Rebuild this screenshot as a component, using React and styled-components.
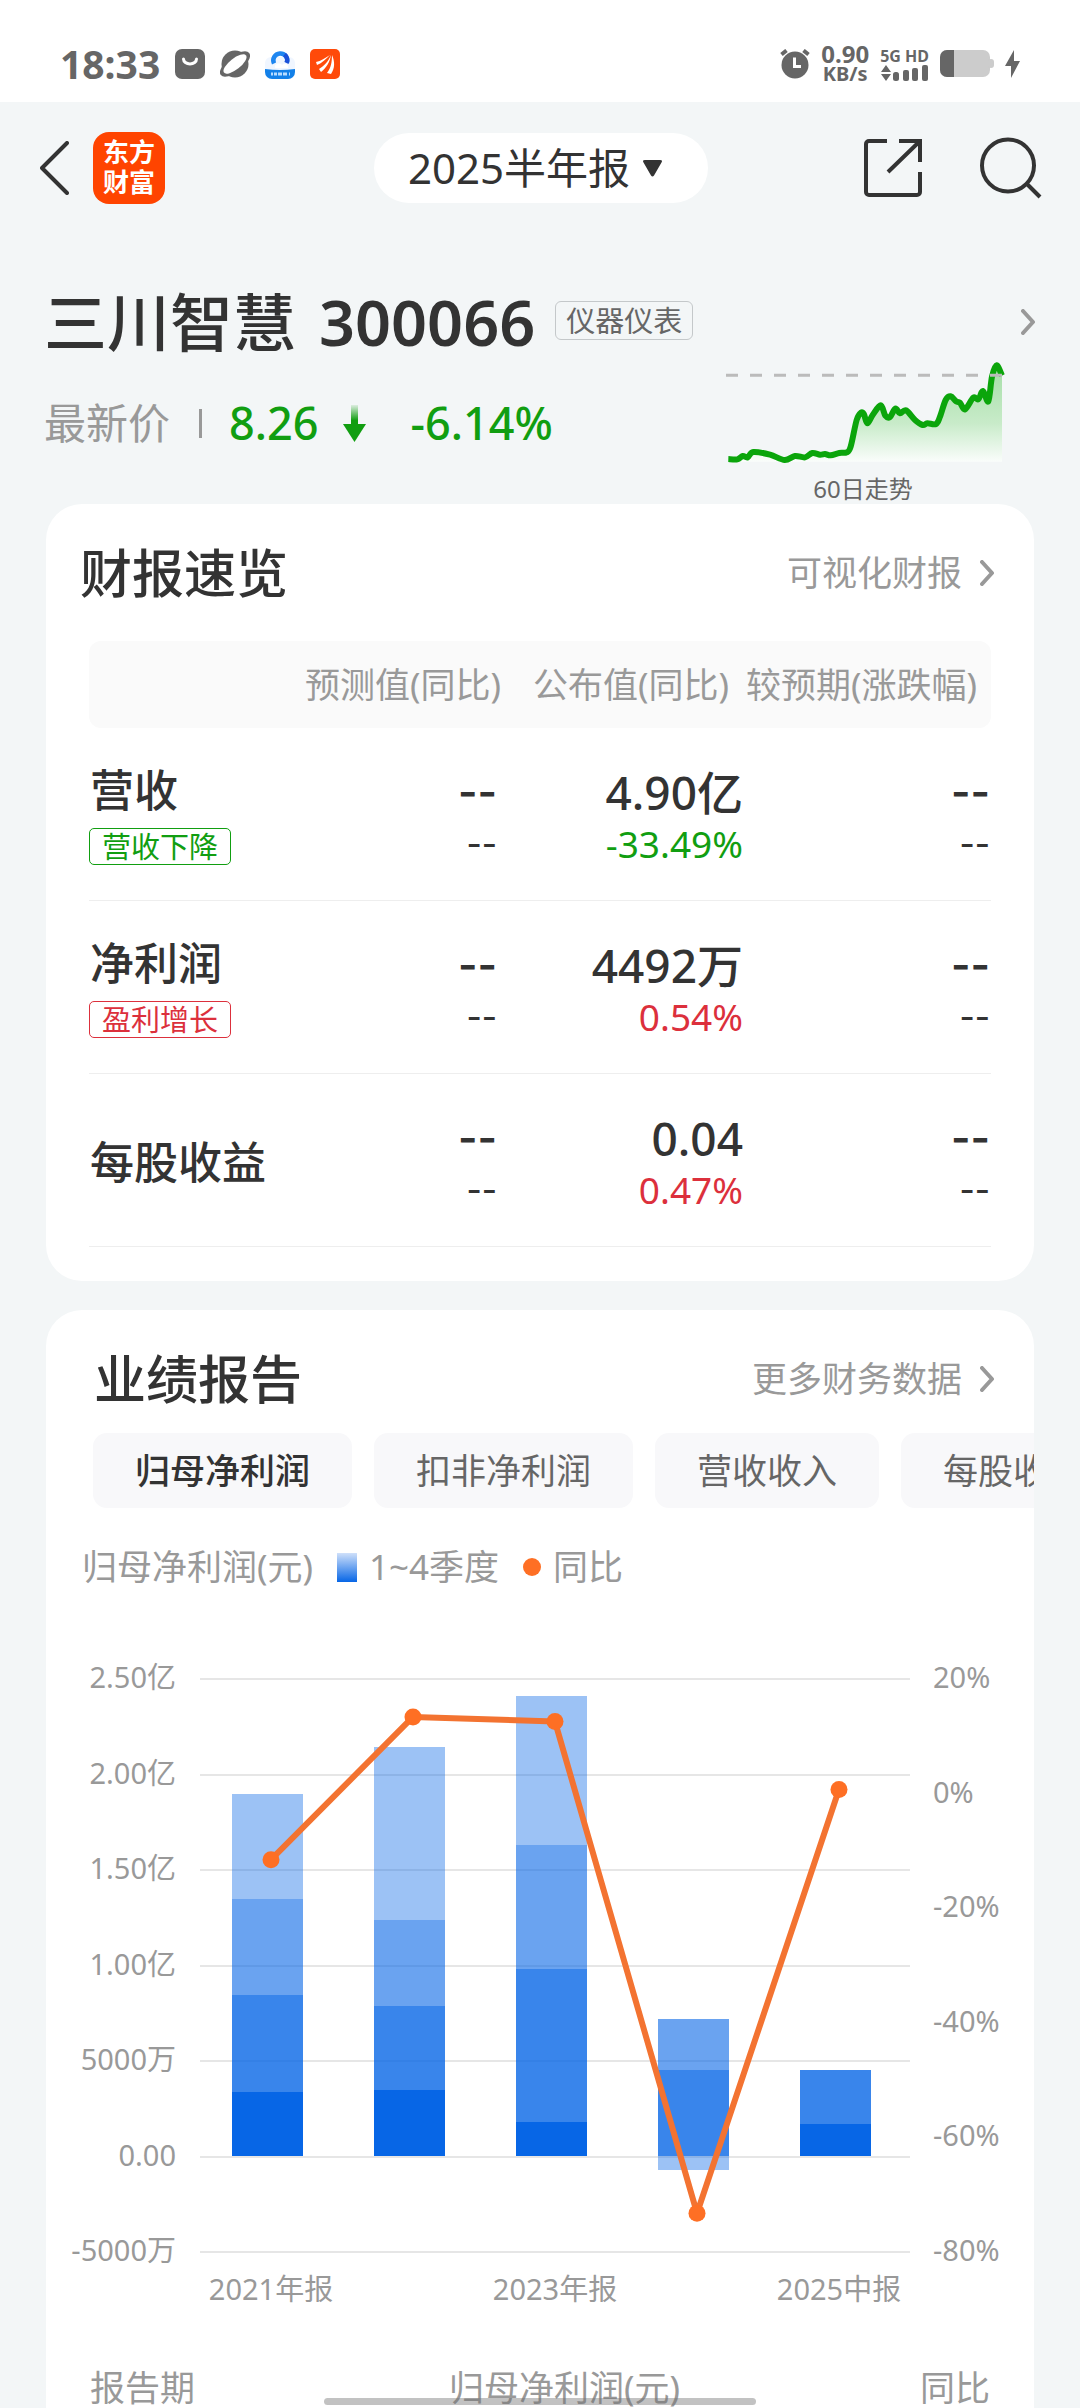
import React from "react";
import styled, { createGlobalStyle } from "styled-components";

const GlobalStyle = createGlobalStyle`
  * { box-sizing: border-box; }
  html, body { margin: 0; padding: 0; }
  body {
    background: #f3f6f7;
    color: #333;
    font-family: "Noto Sans", "Noto Sans CJK SC", sans-serif;
    font-size: 35px;
  }
  button, select { font: inherit; color: inherit; border: 0; margin: 0; padding: 0; background: none; }
  a { color: inherit; text-decoration: none; }
  h1, h2, p, figure { margin: 0; font-size: inherit; font-weight: inherit; }
  svg { display: block; flex: none; }
`;

const GREEN = "#119e11";
const RED = "#dc303c";

const Page = styled.div`
  min-height: 100vh;
  display: flex;
  flex-direction: column;
`;

/* ---------- status bar ---------- */

const StatusBar = styled.div`
  height: 102px;
  padding: 26px 60px 0;
  background: #fff;
  color: #666;
  display: flex;
  align-items: center;
  justify-content: space-between;
`;

const StatusGroup = styled.div`
  display: flex;
  align-items: center;
  gap: ${(p) => p.$gap}px;
`;

const Clock = styled.span`
  font-size: 39px;
  line-height: 40px;
  font-weight: 700;
`;

const Stack = styled.span`
  display: flex;
  flex-direction: column;
  align-items: center;
  font-weight: 700;
`;

const Tiny = styled.span`
  font-size: ${(p) => p.$size}px;
  line-height: ${(p) => p.$line}px;
  white-space: nowrap;
`;

/* ---------- navigation ---------- */

const NavBar = styled.nav`
  height: 132px;
  padding: 0 38px 0 40px;
  display: grid;
  grid-template-columns: 1fr auto 1fr;
  align-items: center;
`;

const NavSide = styled.div`
  display: flex;
  align-items: center;
  justify-content: ${(p) => (p.$end ? "flex-end" : "flex-start")};
  gap: ${(p) => (p.$end ? 58 : 24)}px;
`;

const IconButton = styled.button`
  display: block;
  cursor: pointer;
`;

const Logo = styled.a`
  width: 72px;
  height: 72px;
  padding: 5px 0;
  border-radius: 16px;
  background: #ff4400;
  color: #fff;
  font-size: 26px;
  line-height: 30px;
  font-weight: 700;
  text-align: center;
`;

const PeriodPicker = styled.label`
  height: 70px;
  padding: 0 46px 0 34px;
  border-radius: 35px;
  background: #fff;
  display: flex;
  align-items: center;
  gap: 12px;
`;

const PeriodSelect = styled.select`
  appearance: none;
  font-size: 42px;
  line-height: 60px;
`;

/* ---------- stock header ---------- */

const Hero = styled.header`
  padding: 50px 45px 0 44px;
`;

const TitleRow = styled.div`
  height: 76px;
  display: flex;
  align-items: center;
`;

const StockName = styled.h1`
  display: flex;
  gap: 23px;
  font-size: 63px;
  line-height: 76px;
  font-weight: 500;
  white-space: nowrap;
`;

const StockCode = styled.span`
  font-weight: 600;
`;

const Industry = styled.span`
  margin: 0 auto 4px 20px;
  padding: 0 10px;
  border: 1px solid #c4c8ca;
  border-radius: 6px;
  color: #666;
  font-size: 29px;
  line-height: 37px;
  white-space: nowrap;
`;

const QuoteRow = styled.div`
  padding-right: 29px;
  display: flex;
  justify-content: space-between;
`;

const Quote = styled.p`
  height: 50px;
  margin-top: 38px;
  display: flex;
  align-items: center;
  color: ${GREEN};
  font-size: 45px;
  line-height: 50px;
  font-weight: 500;
`;

const QuoteLabel = styled.span`
  padding-right: 29px;
  color: #999;
  font-size: 42px;
  font-weight: 400;
`;

const QuoteBar = styled.span`
  width: 3px;
  height: 29px;
  margin-right: 27px;
  background: #999;
`;

const QuoteArrow = styled.svg`
  margin: 0 44px 0 25px;
`;

const Trend = styled.figure`
  width: 286px;
  text-align: center;
`;

const TrendCaption = styled.figcaption`
  margin-top: 4px;
  color: #666;
  font-size: 24px;
  line-height: 30px;
`;

/* ---------- cards ---------- */

const Main = styled.main`
  flex: 1;
  padding: 0 46px;
  display: flex;
  flex-direction: column;
  gap: 29px;
`;

const Card = styled.section`
  background: #fff;
  border-radius: ${(p) => (p.$open ? "36px 36px 0 0" : "36px")};
  padding-bottom: ${(p) => (p.$open ? 0 : 34)}px;
  flex: ${(p) => (p.$open ? "1 0 auto" : "none")};
  overflow: hidden;
`;

const CardHead = styled.div`
  padding: 36px 40px 0 ${(p) => p.$inset}px;
  display: flex;
  align-items: center;
  justify-content: space-between;
`;

const CardTitle = styled.h2`
  font-size: 52px;
  line-height: 66px;
  font-weight: 500;
`;

const MoreLink = styled.a`
  display: flex;
  align-items: center;
  gap: 18px;
  color: #999;
  line-height: 50px;
`;

/* ---------- overview table ---------- */

const TableWrap = styled.div`
  padding: 35px 43px 0;
`;

const Table = styled.table`
  width: 100%;
  table-layout: fixed;
  border-spacing: 0;
`;

const HeadCell = styled.th`
  width: ${(p) => (p.$w ? p.$w + "px" : "auto")};
  height: 87px;
  padding: 0 ${(p) => p.$pad || 0}px 0 0;
  background: #fafafa;
  color: #999;
  font-weight: 400;
  line-height: 50px;
  text-align: right;
  white-space: nowrap;
  &:first-child { border-radius: 12px 0 0 12px; }
  &:last-child { border-radius: 0 12px 12px 0; }
`;

const LabelCell = styled.th`
  padding: 36px 0 32px 1px;
  border-bottom: 1px solid #eee;
  font-size: 44px;
  line-height: 52px;
  font-weight: 500;
  text-align: left;
  vertical-align: middle;
`;

const Badge = styled.span`
  display: block;
  width: fit-content;
  margin: 12px 0 3px -1px;
  padding: 0 12px;
  border: 1px solid;
  border-radius: 5px;
  color: ${(p) => p.$color};
  font-size: 29px;
  line-height: 35px;
  font-weight: 400;
`;

const ValueCell = styled.td`
  padding: 38px ${(p) => p.$pad}px 30px 0;
  border-bottom: 1px solid #eee;
  text-align: right;
  vertical-align: top;
`;

const Value = styled.span`
  display: block;
  font-size: 46px;
  line-height: 52px;
  font-weight: 500;
`;

const Change = styled.span`
  display: block;
  color: ${(p) => p.$color};
  font-size: 37px;
  line-height: 52px;
`;

const Dash = styled.span`
  display: block;
  height: 52px;
  font-family: Inter, "Noto Sans", sans-serif;
  font-size: ${(p) => (p.$small ? 33 : 42)}px;
  line-height: 52px;
  font-weight: ${(p) => (p.$small ? 500 : 600)};
`;

/* ---------- report card ---------- */

const Tabs = styled.div`
  margin-top: 21px;
  padding-left: 47px;
  display: flex;
  gap: 22px;
  overflow: hidden;
`;

const Tab = styled.button`
  flex: none;
  padding: 0 42px;
  border-radius: 14px;
  background: #f8f8fa;
  color: ${(p) => (p.$active ? "#333" : "#666")};
  font-weight: ${(p) => (p.$active ? 500 : 400)};
  line-height: 75px;
  cursor: pointer;
`;

const Legend = styled.div`
  margin-top: 34px;
  padding-left: 36px;
  display: flex;
  gap: 24px;
  color: #999;
  line-height: 50px;
`;

const LegendItem = styled.span`
  display: flex;
  align-items: center;
  gap: 12px;
`;

const Swatch = styled.i`
  width: 20px;
  height: 29px;
  background: linear-gradient(#cfe0fa, #0766e6);
`;

const Dot = styled.i`
  width: 18px;
  height: 18px;
  border-radius: 50%;
  background: #fe6f24;
`;

const ChartSvg = styled.svg`
  width: 100%;
  height: auto;
  fill: #999;
  font-size: 29px;
`;

const HistoryTable = styled(Table)`
  padding: 0 44px;
`;

const HistoryHead = styled.th`
  width: ${(p) => (p.$w ? p.$w + "px" : "auto")};
  padding: 0;
  color: #999;
  font-weight: 400;
  line-height: 42px;
  text-align: ${(p) => p.$align || "right"};
`;

const HomeBar = styled.div`
  position: fixed;
  left: 50%;
  bottom: 3px;
  width: 40%;
  height: 7px;
  border-radius: 4px;
  background: rgba(110, 110, 110, 0.42);
  transform: translateX(-50%);
`;

/* ---------- icons ---------- */

const Chevron = () => (
  <svg width="14" height="26" viewBox="0 0 14 26" fill="none" stroke="#999" strokeWidth="4" strokeLinecap="round" strokeLinejoin="round">
    <path d="M2 2l10 11L2 24" />
  </svg>
);

const BagIcon = () => (
  <svg width="30" height="30" viewBox="0 0 30 30">
    <rect width="30" height="30" rx="7" fill="#666" />
    <path d="M8.500 10a6.500 5 0 0 0 13 0" fill="none" stroke="#fff" strokeWidth="3" strokeLinecap="round" />
  </svg>
);

const PlanetIcon = () => (
  <svg width="30" height="30" viewBox="0 0 30 30">
    <circle cx="15" cy="15" r="13.500" fill="#666" />
    <ellipse cx="15" cy="15" rx="18" ry="8" transform="rotate(-38 15 15)" fill="#666" />
    <ellipse cx="15" cy="15" rx="14" ry="5.500" transform="rotate(-38 15 15)" fill="#fff" />
  </svg>
);

const CloudIcon = () => (
  <svg width="30" height="30" viewBox="0 0 30 30">
    <rect y="8" width="30" height="22" rx="6" fill="#f0f6ff" />
    <path d="M9 14.500a7 7 0 1 1 13-1" fill="none" stroke="#1e86f0" strokeWidth="4.500" />
    <path d="M19.500 5.500a7 7 0 0 1 2 8.500" fill="none" stroke="#1a50d8" strokeWidth="4.500" />
    <path d="M10 19c-1-4 4-6 7-3 3-3 7 0 6 3z" fill="#fff" />
    <path d="M0 20q15 2 30 0v3a7 7 0 0 1-7 7H7a7 7 0 0 1-7-7z" fill="#1380e8" />
    <path d="M6 25h2m1 0h3m1 0h4m1 0h4m2 0h1" stroke="#b8dcff" strokeWidth="3" />
  </svg>
);

const FanIcon = () => (
  <svg width="30" height="30" viewBox="0 0 30 30">
    <rect width="30" height="30" rx="5" fill="#ff4a0a" />
    <path d="M6 13c5-1 9-4 14-7-4 4-8 8-13 10zM9 20c5-3 9-7 12-14-1 7-5 13-10 17zM17 24c4-5 5-11 5-18 3 7 3 13-1 19z" fill="#fff" />
  </svg>
);

const AlarmIcon = () => (
  <svg width="30" height="30" viewBox="0 0 30 30">
    <circle cx="15" cy="16" r="13.500" fill="#666" />
    <path d="M1.500 5.500l5-4M28.500 5.500l-5-4" stroke="#666" strokeWidth="4" />
    <path d="M14.500 8.500v9h6.500" fill="none" stroke="#fff" strokeWidth="3" />
  </svg>
);

const SignalIcon = () => (
  <svg width="48" height="17" viewBox="0 0 48 17" fill="#666">
    <path d="M5 0l5 7H0zM5 16l5-7H0z" />
    <rect x="12" y="7" width="6" height="9" rx="2.500" />
    <rect x="22" y="5" width="6" height="11" rx="2" />
    <rect x="31" y="3" width="6" height="13" rx="2" />
    <rect x="41" y="0" width="6" height="16" rx="2" />
  </svg>
);

const BatteryIcon = () => (
  <svg width="54" height="28" viewBox="0 0 54 28">
    <rect width="50" height="27" rx="7" fill="#ccc" />
    <rect x="48" y="9" width="6" height="9" rx="3" fill="#ccc" />
    <path d="M7 0h7v27H7a7 7 0 0 1-7-7V7a7 7 0 0 1 7-7z" fill="#666" />
  </svg>
);

const BoltIcon = () => (
  <svg width="15" height="28" viewBox="0 0 15 28" fill="#666">
    <path d="M9 0L0 16h6v12l9-17H9z" />
  </svg>
);

/* ---------- charts ---------- */

const TREND_POINTS = [
  [145, 537], [172, 538], [188, 528], [203, 532], [220, 516], [270, 524], [314, 540],
  [345, 528], [375, 532], [397, 519], [420, 524], [435, 522], [452, 526], [478, 519],
  [500, 517], [512, 500], [530, 420], [543, 398], [552, 403], [562, 430], [578, 405],
  [602, 376], [616, 407], [630, 411], [646, 386], [660, 400], [678, 391], [705, 420],
  [728, 435], [742, 430], [768, 432], [780, 410], [797, 360], [812, 349], [828, 364],
  [840, 368], [855, 388], [880, 353], [895, 358], [909, 333], [925, 364], [936, 290],
  [950, 256], [966, 287],
];

// Catmull-Rom spline through the points, as cubic Bezier segments.
const spline = (pts) =>
  pts.reduce((d, p, i) => {
    if (i === 0) return `M${p[0]} ${p[1]}`;
    const a = pts[i - 2] || pts[i - 1];
    const b = pts[i - 1];
    const n = pts[i + 1] || p;
    const c1 = [b[0] + (p[0] - a[0]) / 6, b[1] + (p[1] - a[1]) / 6];
    const c2 = [p[0] - (n[0] - b[0]) / 6, p[1] - (n[1] - b[1]) / 6];
    return `${d}C${c1} ${c2} ${p}`;
  }, "");

function TrendChart() {
  const line = spline(TREND_POINTS);
  return (
    <svg width="286" height="110" viewBox="120 240 858 330" fill="none">
      <defs>
        <linearGradient id="trend" x1="0" y1="0" x2="0" y2="1">
          <stop offset="0" stopColor="#a4dea6" />
          <stop offset="0.6" stopColor="#c8ebc9" />
          <stop offset="1" stopColor="#fafdfb" />
        </linearGradient>
      </defs>
      <path d={`${line}V545H145Z`} fill="url(#trend)" />
      <path d={line} stroke="#0ba50b" strokeWidth="18" strokeLinejoin="round" />
      <path d="M138 286H970" stroke="#bbb" strokeWidth="9" strokeDasharray="36 36" />
    </svg>
  );
}

const BAR_COLOR = "#0766e6";
const QUARTER_OPACITY = [1, 0.8, 0.6, 0.4];

// Cumulative profit in 亿 at the end of each quarter, and the yearly change in %.
const YEARS = [
  { label: "2021年报", totals: [0.335, 0.84, 1.345, 1.895], change: -11.7 },
  { label: "2022年报", totals: [0.343, 0.785, 1.235, 2.14], change: 13.2 },
  { label: "2023年报", totals: [0.177, 0.977, 1.627, 2.405], change: 12.4 },
  { label: "2024年报", totals: [0, 0.447, 0.717], loss: -0.077, change: -73.4 },
  { label: "2025中报", totals: [0.165, 0.447], change: 0.54 },
];

const LEFT_TICKS = ["2.50亿", "2.00亿", "1.50亿", "1.00亿", "5000万", "0.00", "-5000万"];
const RIGHT_TICKS = ["20%", "0%", "-20%", "-40%", "-60%", "-80%"];

const TOP = 86;
const amountY = (v) => Math.round(TOP + (2.5 - v) * 191);
const changeY = (p) => TOP + (20 - p) * 5.73;
const barX = (i) => 186 + i * 142;
const pointX = (i) => 225 + i * 142;

function ProfitChart() {
  return (
    <ChartSvg viewBox="0 0 988 775" role="img" aria-label="归母净利润">
      {LEFT_TICKS.map((t, i) => {
        const y = Math.round(TOP + i * 95.5);
        return (
          <g key={t}>
            <rect x="154" y={y} width="710" height="2" fill="#e6e6e6" />
            <text x="130" y={y + 10} textAnchor="end">{t}</text>
          </g>
        );
      })}
      {RIGHT_TICKS.map((t, i) => (
        <text key={t} x="887" y={Math.round(TOP + i * 114.6) + 10}>{t}</text>
      ))}
      {YEARS.map((y, i) => (
        <g key={y.label} fill={BAR_COLOR}>
          {y.totals.map((t, q) => {
            const from = amountY(q ? y.totals[q - 1] : 0);
            return (
              <rect key={q} x={barX(i)} width="71" y={amountY(t)} height={from - amountY(t)} fillOpacity={QUARTER_OPACITY[q]} />
            );
          })}
          {y.loss && (
            <rect x={barX(i)} width="71" y={amountY(0)} height={amountY(y.loss) - amountY(0)} fillOpacity={QUARTER_OPACITY[3]} />
          )}
        </g>
      ))}
      <polyline
        points={YEARS.map((y, i) => `${pointX(i)},${changeY(y.change)}`).join(" ")}
        fill="none"
        stroke="#f37331"
        strokeWidth="6"
        strokeLinejoin="round"
      />
      {YEARS.map((y, i) => (
        <circle key={y.label} cx={pointX(i)} cy={changeY(y.change)} r="8.500" fill="#fe6f24" />
      ))}
      {YEARS.map((y, i) =>
        i % 2 === 0 ? (
          <text key={y.label} x={pointX(i)} y="708" textAnchor="middle">{y.label}</text>
        ) : null
      )}
    </ChartSvg>
  );
}

/* ---------- page ---------- */

const ROWS = [
  { label: "营收", badge: "营收下降", badgeColor: GREEN, value: "4.90亿", change: "-33.49%", color: GREEN },
  { label: "净利润", badge: "盈利增长", badgeColor: RED, value: "4492万", change: "0.54%", color: RED },
  { label: "每股收益", value: "0.04", change: "0.47%", color: RED },
];

const TABS = ["归母净利润", "扣非净利润", "营收收入", "每股收益"];

const NoData = ({ pad }) => (
  <ValueCell $pad={pad}>
    <Dash>--</Dash>
    <Dash $small>--</Dash>
  </ValueCell>
);

export default function App() {
  return (
    <Page>
      <GlobalStyle />
      <StatusBar>
        <StatusGroup $gap={15}>
          <Clock>18:33</Clock>
          <BagIcon />
          <PlanetIcon />
          <CloudIcon />
          <FanIcon />
        </StatusGroup>
        <StatusGroup $gap={11}>
          <AlarmIcon />
          <Stack>
            <Tiny $size={24} $line={20}>0.90</Tiny>
            <Tiny $size={20} $line={20}>KB/s</Tiny>
          </Stack>
          <Stack>
            <Tiny $size={16} $line={18}>5G HD</Tiny>
            <SignalIcon />
          </Stack>
          <BatteryIcon />
          <BoltIcon />
        </StatusGroup>
      </StatusBar>

      <NavBar>
        <NavSide>
          <IconButton aria-label="返回">
            <svg width="29" height="54" viewBox="0 0 29 54" fill="none" stroke="#333" strokeWidth="4" strokeLinecap="round" strokeLinejoin="round">
              <path d="M27 2L2 27l25 25" />
            </svg>
          </IconButton>
          <Logo href="#">东方<br />财富</Logo>
        </NavSide>
        <PeriodPicker>
          <PeriodSelect aria-label="报告期">
            <option>2025半年报</option>
          </PeriodSelect>
          <svg width="19" height="17" viewBox="0 0 19 17" fill="#333">
            <path d="M2 0h15q3 0 1.500 2.500L11 15.500q-1.500 2-3 0L.5 2.500Q-1 0 2 0z" />
          </svg>
        </PeriodPicker>
        <NavSide $end>
          <IconButton aria-label="分享">
            <svg width="58" height="58" viewBox="0 0 58 58" fill="none" stroke="#333" strokeWidth="4">
              <path d="M23 2H5a3 3 0 0 0-3 3v48a3 3 0 0 0 3 3h48a3 3 0 0 0 3-3V33M35 2h21v21M56 2L24 33" />
            </svg>
          </IconButton>
          <IconButton aria-label="搜索">
            <svg width="62" height="62" viewBox="0 0 62 62" fill="none" stroke="#333" strokeWidth="4">
              <circle cx="28" cy="28.500" r="26" />
              <path d="M47 47l13 13" />
            </svg>
          </IconButton>
        </NavSide>
      </NavBar>

      <Hero>
        <TitleRow>
          <StockName>
            三川智慧<StockCode>300066</StockCode>
          </StockName>
          <Industry>仪器仪表</Industry>
          <Chevron />
        </TitleRow>
        <QuoteRow>
          <Quote>
            <QuoteLabel>最新价</QuoteLabel>
            <QuoteBar />
            8.26
            <QuoteArrow width="23" height="37" viewBox="0 0 23 37">
              <defs>
                <linearGradient id="stem" x1="0" y1="0" x2="0" y2="1">
                  <stop offset="0" stopColor={GREEN} stopOpacity="0.1" />
                  <stop offset="0.7" stopColor={GREEN} />
                </linearGradient>
              </defs>
              <path d="M8 0h7v22H8z" fill="url(#stem)" />
              <path d="M0 19h23L11.500 37z" fill={GREEN} />
            </QuoteArrow>
            -6.14%
          </Quote>
          <Trend>
            <TrendChart />
            <TrendCaption>60日走势</TrendCaption>
          </Trend>
        </QuoteRow>
      </Hero>

      <Main>
        <Card>
          <CardHead $inset={34}>
            <CardTitle>财报速览</CardTitle>
            <MoreLink href="#">可视化财报<Chevron /></MoreLink>
          </CardHead>
          <TableWrap>
            <Table>
              <thead>
                <tr>
                  <HeadCell aria-label="指标" />
                  <HeadCell $w={217} $pad={5}>预测值(同比)</HeadCell>
                  <HeadCell $w={238} $pad={15}>公布值(同比)</HeadCell>
                  <HeadCell $w={247} $pad={14}>较预期(涨跌幅)</HeadCell>
                </tr>
              </thead>
              <tbody>
                {ROWS.map((r) => (
                  <tr key={r.label}>
                    <LabelCell scope="row">
                      {r.label}
                      {r.badge && <Badge $color={r.badgeColor}>{r.badge}</Badge>}
                    </LabelCell>
                    <NoData pad={9} />
                    <ValueCell $pad={1}>
                      <Value>{r.value}</Value>
                      <Change $color={r.color}>{r.change}</Change>
                    </ValueCell>
                    <NoData pad={1} />
                  </tr>
                ))}
              </tbody>
            </Table>
          </TableWrap>
        </Card>

        <Card $open>
          <CardHead $inset={48}>
            <CardTitle>业绩报告</CardTitle>
            <MoreLink href="#">更多财务数据<Chevron /></MoreLink>
          </CardHead>
          <Tabs>
            {TABS.map((t, i) => (
              <Tab key={t} $active={i === 0}>{t}</Tab>
            ))}
          </Tabs>
          <Legend>
            <span>归母净利润(元)</span>
            <LegendItem><Swatch />1~4季度</LegendItem>
            <LegendItem><Dot />同比</LegendItem>
          </Legend>
          <ProfitChart />
          <HistoryTable>
            <thead>
              <tr>
                <HistoryHead $align="left">报告期</HistoryHead>
                <HistoryHead $w={320}>归母净利润(元)</HistoryHead>
                <HistoryHead $w={310}>同比</HistoryHead>
              </tr>
            </thead>
          </HistoryTable>
        </Card>
      </Main>
      <HomeBar />
    </Page>
  );
}
